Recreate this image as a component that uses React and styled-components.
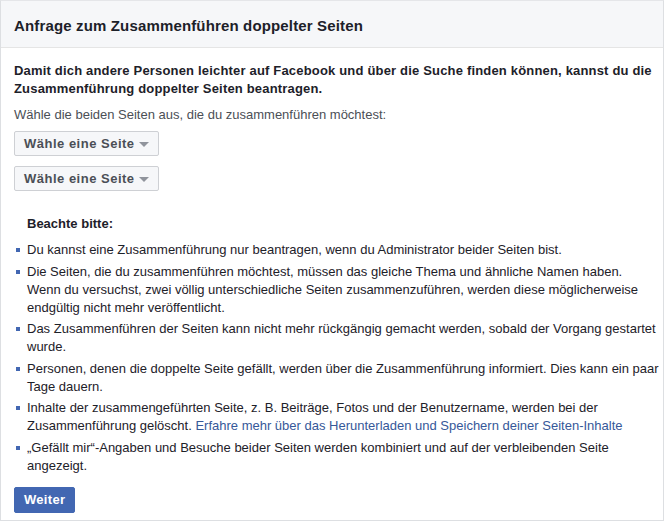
import React from 'react'
import styled, { createGlobalStyle } from 'styled-components'

const GlobalStyle = createGlobalStyle`
  html, body {
    margin: 0;
    padding: 0;
    background: #fff;
  }
  body {
    font-family: "Liberation Sans", Arial, sans-serif;
    color: #1d2129;
    -webkit-font-smoothing: antialiased;
  }
`

const notes = [
  'Du kannst eine Zusammenführung nur beantragen, wenn du Administrator beider Seiten bist.',
  'Die Seiten, die du zusammenführen möchtest, müssen das gleiche Thema und ähnliche Namen haben. Wenn du versuchst, zwei völlig unterschiedliche Seiten zusammenzuführen, werden diese möglicherweise endgültig nicht mehr veröffentlicht.',
  'Das Zusammenführen der Seiten kann nicht mehr rückgängig gemacht werden, sobald der Vorgang gestartet wurde.',
  'Personen, denen die doppelte Seite gefällt, werden über die Zusammenführung informiert. Dies kann ein paar Tage dauern.',
  null,
  '„Gefällt mir“-Angaben und Besuche beider Seiten werden kombiniert und auf der verbleibenden Seite angezeigt.',
]

const App = () => {
  return (
    <>
      <GlobalStyle />
      <Frame>
        <Header>
          <Title>Anfrage zum Zusammenführen doppelter Seiten</Title>
        </Header>

        <Body>
          <Intro>
            Damit dich andere Personen leichter auf Facebook und über die Suche finden können,
            kannst du die Zusammenführung doppelter Seiten beantragen.
          </Intro>
          <Hint>Wähle die beiden Seiten aus, die du zusammenführen möchtest:</Hint>

          <Pickers>
            <PageSelect>Wähle eine Seite <Caret /></PageSelect>
            <PageSelect>Wähle eine Seite <Caret /></PageSelect>
          </Pickers>

          <NoteTitle>Beachte bitte:</NoteTitle>
          <NoteList>
            {notes.map((text, i) =>
              text ? (
                <Note key={i}>{text}</Note>
              ) : (
                <Note key={i}>
                  Inhalte der zusammengeführten Seite, z. B. Beiträge, Fotos und der Benutzername,
                  werden bei der Zusammenführung gelöscht.{' '}
                  <a href="#">Erfahre mehr über das Herunterladen und Speichern deiner Seiten-Inhalte</a>
                </Note>
              )
            )}
          </NoteList>

          <SubmitButton>Weiter</SubmitButton>
        </Body>
      </Frame>
    </>
  )
}

const Frame = styled.div`
  width: 662px;
  border: 1px solid #dddfe2;
  border-top-color: #e5e6e9;
  background: #fff;
`

const Header = styled.div`
  height: 47px;
  display: flex;
  align-items: center;
  padding: 2px 13px 0;
  box-sizing: border-box;
  background: #f6f7f9;
  border-bottom: 1px solid #e5e5e5;
`

const Title = styled.h2`
  margin: 0;
  font-size: 15px;
  letter-spacing: 0.15px;
  font-weight: bold;
  color: #1d2129;
`

const Body = styled.div`
  padding: 14px 3.8px 7px 13px;
  font-size: 13px;
  line-height: 18px;
`

const Intro = styled.p`
  margin: 0 2px 0 0;
  font-weight: bold;
  letter-spacing: 0.18px;
`

const Hint = styled.p`
  margin: 8px 0 0;
  color: #4b4f56;
`

const Pickers = styled.div`
  display: flex;
  flex-direction: column;
  align-items: flex-start;
  gap: 10px;
  margin-top: 7px;
`

const PageSelect = styled.button`
  display: inline-flex;
  align-items: center;
  gap: 4px;
  height: 25px;
  padding: 0 9px;
  border: 1px solid #ced0d4;
  border-radius: 2px;
  background: #f6f7f9;
  color: #4b4f56;
  font-family: inherit;
  font-size: 13px;
  font-weight: bold;
  letter-spacing: 0.5px;
  cursor: pointer;
`

const Caret = styled.span`
  width: 0;
  height: 0;
  border-left: 5px solid transparent;
  border-right: 5px solid transparent;
  border-top: 5px solid #90949c;
  margin-top: 1px;
`

const NoteTitle = styled.h4`
  margin: 24px 0 0 13px;
  font-size: 13px;
  font-weight: bold;
`

const NoteList = styled.ul`
  margin: 8px 0 0;
  padding: 0 0 0 13px;
  list-style: none;
`

const Note = styled.li`
  position: relative;
  margin-bottom: 3.6px;
  color: #1d2129;

  &::before {
    content: '';
    position: absolute;
    left: -11px;
    top: 7px;
    width: 4px;
    height: 4px;
    background: #4267b2;
  }

  a {
    color: #365899;
    text-decoration: none;
  }
`

const SubmitButton = styled.button`
  margin-top: 8px;
  height: 26px;
  padding: 0 9px;
  border: 1px solid #4267b2;
  border-radius: 2px;
  background: #4267b2;
  color: #fff;
  font-family: inherit;
  font-size: 13px;
  font-weight: bold;
  letter-spacing: 0.3px;
  cursor: pointer;
`

export default App
